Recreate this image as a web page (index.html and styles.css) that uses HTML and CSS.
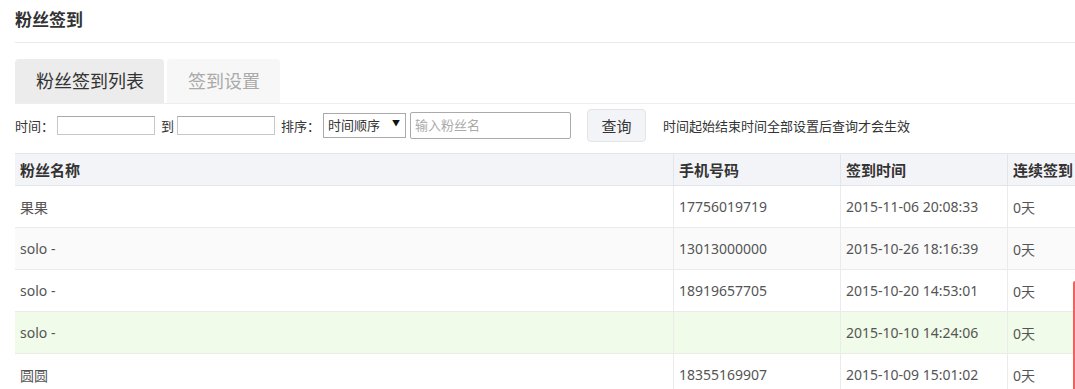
FILE: index.html
```html
<!DOCTYPE html>
<html lang="zh-CN">
<head>
    <meta charset="UTF-8">
    <meta name="viewport" content="width=device-width, initial-scale=1.0">
    <title>粉丝签到</title>
    <link rel="stylesheet" href="styles.css">
</head>
<body>
    <main class="page">
        <h1 class="page-title">粉丝签到</h1>

        <nav class="tabs">
            <a class="tab tab--active">粉丝签到列表</a>
            <a class="tab">签到设置</a>
        </nav>

        <form class="filter">
            <label>时间：</label>
            <input class="date" type="text">
            <label class="to">到</label>
            <input class="date" type="text">
            <label class="sort-label">排序：</label>
            <span class="select-wrap">
                <select class="sort">
                    <option>时间顺序</option>
                    <option>时间倒序</option>
                </select>
                <span class="arrow">▼</span>
            </span>
            <input class="name" type="text" placeholder="输入粉丝名">
            <button class="query" type="button">查询</button>
            <span class="hint">时间起始结束时间全部设置后查询才会生效</span>
        </form>

        <div class="table-wrap">
            <table class="list">
                <thead>
                    <tr>
                        <th class="c-name">粉丝名称</th>
                        <th class="c-phone">手机号码</th>
                        <th class="c-time">签到时间</th>
                        <th class="c-days">连续签到</th>
                    </tr>
                </thead>
                <tbody>
                    <tr>
                        <td>果果</td>
                        <td>17756019719</td>
                        <td>2015-11-06 20:08:33</td>
                        <td>0天</td>
                    </tr>
                    <tr class="odd">
                        <td>solo -</td>
                        <td>13013000000</td>
                        <td>2015-10-26 18:16:39</td>
                        <td>0天</td>
                    </tr>
                    <tr>
                        <td>solo -</td>
                        <td>18919657705</td>
                        <td>2015-10-20 14:53:01</td>
                        <td>0天</td>
                    </tr>
                    <tr class="hover">
                        <td>solo -</td>
                        <td></td>
                        <td>2015-10-10 14:24:06</td>
                        <td>0天</td>
                    </tr>
                    <tr>
                        <td>圆圆</td>
                        <td>18355169907</td>
                        <td>2015-10-09 15:01:02</td>
                        <td>0天</td>
                    </tr>
                </tbody>
            </table>
        </div>
    </main>
    <div class="side-flag"></div>
</body>
</html>
```

FILE: styles.css
```css
body{
    margin: 0;
    background: #fff;
    font-family: "Noto Sans", "Noto Sans CJK SC", sans-serif;
    color: #333;
    overflow: hidden;
}

.page{
    padding: 0 0 0 15px;
}

.page-title{
    margin: 0;
    height: 42px;
    line-height: 40px;
    font-size: 17px;
    font-weight: bold;
    color: #333;
    border-bottom: 1px solid #ebebeb;
}

.tabs{
    display: flex;
    gap: 3px;
    margin-top: 16px;
    border-bottom: 1px solid #eeeeee;
}

.tab{
    height: 44px;
    line-height: 44px;
    padding: 0 20px 0 21px;
    font-size: 18px;
    color: #aaa;
    background-color: #f7f7f7;
    border-radius: 4px 4px 0 0;
}

.tab--active{
    color: #333;
    background-color: #ececec;
}

.filter{
    display: flex;
    align-items: center;
    height: 38px;
    margin-top: 2px;
    font-size: 13px;
    color: #333;
}

.filter label{
    margin-right: 3px;
}

.filter .to,
.filter .sort-label{
    margin-left: 6px;
    margin-right: 3px;
}

.date{
    box-sizing: border-box;
    width: 98px;
    height: 19px;
    padding: 1px;
    border: 1px solid #c8c8c8;
    border-top-color: #a8a8a8;
    font-size: 13px;
}

.select-wrap{
    position: relative;
}

.sort{
    appearance: none;
    -webkit-appearance: none;
    box-sizing: border-box;
    width: 83px;
    height: 25px;
    padding: 0 4px;
    border: 1px solid #aaa;
    border-radius: 0;
    background: #fff;
    font-family: inherit;
    font-size: 13px;
    color: #333;
}

.arrow{
    position: absolute;
    right: 6px;
    top: 4px;
    font-size: 8px;
    color: #111;
    pointer-events: none;
}

.name{
    box-sizing: border-box;
    width: 161px;
    height: 27px;
    margin-left: 4px;
    padding: 1px 4px;
    border: 1px solid #aaa;
    border-radius: 2px;
    font-family: inherit;
    font-size: 13px;
}

.name::placeholder{
    color: #aaa;
}

.query{
    width: 59px;
    height: 33px;
    margin-left: 16px;
    border: 1px solid #e2e4e8;
    border-radius: 4px;
    background-color: #f3f4f7;
    font-family: inherit;
    font-size: 15px;
    color: #333;
}

.hint{
    margin-left: 17px;
    font-size: 13px;
}

.table-wrap{
    margin-top: 9px;
}

.list{
    width: 1170px;
    border-collapse: collapse;
    font-size: 14px;
    color: #555;
}

.list th{
    height: 31px;
    padding: 0 5px;
    text-align: left;
    font-size: 15px;
    font-weight: bold;
    color: #333;
    background-color: #f3f4f8;
    border: 1px solid #e3e5ea;
    border-left: none;
}

.list th + th{
    border-left: 1px solid #e3e5ea;
}

.list td{
    height: 41px;
    padding: 0 5px;
    border-bottom: 1px solid #ebebeb;
}

.list td + td{
    border-left: 1px solid #ebebeb;
}

.c-name{
    width: 648px;
}

.c-phone,.c-time{
    width: 156px;
}

.list tr.odd td{
    background-color: #fafafa;
}

.list tr.hover td{
    background-color: #f0fbe9;
}

.side-flag{
    position: fixed;
    right: -2px;
    top: 281px;
    bottom: 0;
    width: 4px;
    background-color: #f06262;
    border-radius: 3px 3px 0 0;
}
```
